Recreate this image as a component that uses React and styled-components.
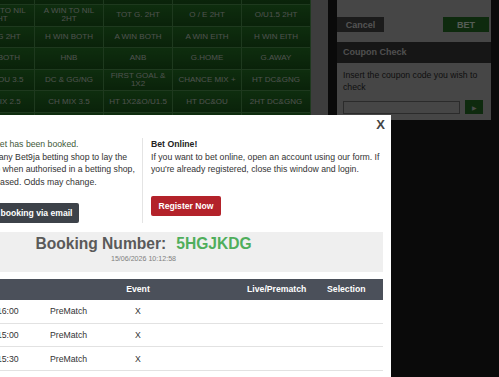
import React from 'react'
import styled, { createGlobalStyle } from 'styled-components'

const GlobalStyle = createGlobalStyle`
  html, body {
    margin: 0;
    padding: 0;
  }
  body {
    font-family: "Liberation Sans", Arial, sans-serif;
    background: #191919;
  }
`

const markets = [
  ['1X2 2HT', 'H WIN TO NIL 2HT', 'DC 2HT', 'GG/NG 2HT', 'O/U0.5 2HT'],
  ['H WIN TO NIL 2HT', 'A WIN TO NIL 2HT', 'TOT G. 2HT', 'O / E 2HT', 'O/U1.5 2HT'],
  ['TOT G 2HT', 'H WIN BOTH', 'A WIN BOTH', 'A WIN EITH', 'H WIN EITH'],
  ['WIN BOTH', 'HNB', 'ANB', 'G.HOME', 'G.AWAY'],
  ['DC & OU 3.5', 'DC & GG/NG', 'FIRST GOAL & 1X2', 'CHANCE MIX +', 'HT DC&GNG'],
  ['CH MIX 2.5', 'CH MIX 3.5', 'HT 1X2&O/U1.5', 'HT DC&OU', '2HT DC&GNG'],
  ['CH MIX 4.5', 'HT CH MIX', 'HT DC&GG', 'MULTI GOAL', 'EXACT G.'],
  ['HT/FT', 'HT O/U', 'HT GG/NG', 'HT 1X2', 'HT DC'],
  ['ODD/EVEN', 'CS', 'H O/U', 'A O/U', '1ST GOAL'],
  ['H GG', 'A GG', 'DNB', 'WIN MARG', 'TOTAL'],
  ['H TOT G', 'A TOT G', 'H CS', 'A CS', 'SPECIAL'],
  ['MIX 1', 'MIX 2', 'MIX 3', 'MIX 4', 'MIX 5'],
  ['MORE', 'MORE', 'MORE', 'MORE', 'MORE'],
]

const events = [
  { no: 1, date: '15/06/2026 16:00', type: 'PreMatch', event: 'X' },
  { no: 2, date: '15/06/2026 15:00', type: 'PreMatch', event: 'X' },
  { no: 3, date: '15/06/2026 15:30', type: 'PreMatch', event: 'X' },
  { no: 4, date: '15/06/2026 17:00', type: 'PreMatch', event: 'X' },
]

// # | date | type | event | market | live/prematch | selection
const columns = '39px 99px 73px 46px 78px 80px 64px'

export default function App() {
  return (
    <>
      <GlobalStyle />
      <Page>
        <Main>
          <MarketGrid>
            {markets.flat().map((m, i) => (
              <MarketCell key={i}>{m}</MarketCell>
            ))}
          </MarketGrid>
        </Main>

        <Sidebar>
          <SlipActions>
            <SlipButton>Cancel</SlipButton>
            <SlipButton $primary>BET</SlipButton>
          </SlipActions>
          <CouponHeader>Coupon Check</CouponHeader>
          <CouponBody>
            <CouponText>Insert the coupon code you wish to check</CouponText>
            <CouponForm>
              <CouponInput type="text" />
              <GoButton>&#9654;</GoButton>
            </CouponForm>
          </CouponBody>
        </Sidebar>

        <Overlay />

        <Modal>
          <CloseButton>X</CloseButton>

          <InfoRow>
            <InfoColumn $left>
              <Notice>
                <Booked>Your bet has been booked.</Booked>
                <br />
                Go to any Bet9ja betting shop to lay the
                <br />
                betslip when authorised in a betting shop,
                <br />
                till released. Odds may change.
              </Notice>
              <ActionButton $mt={14} $shift={-4}>Send booking via email</ActionButton>
            </InfoColumn>

            <InfoColumn>
              <OnlineTitle>Bet Online!</OnlineTitle>
              <Notice $wrap>
                If you want to bet online, open an account using our form. If you're already
                registered, close this window and login.
              </Notice>
              <ActionButton $mt={20} $red>Register Now</ActionButton>
            </InfoColumn>
          </InfoRow>

          <BookingBox>
            <BookingTitle>
              Booking Number:<BookingCode>5HGJKDG</BookingCode>
            </BookingTitle>
            <BookingDate>15/06/2026 10:12:58</BookingDate>
          </BookingBox>

          <Table>
            <TableHead>
              <HeadCell>#</HeadCell>
              <HeadCell>Date</HeadCell>
              <HeadCell></HeadCell>
              <HeadCell $center>Event</HeadCell>
              <HeadCell></HeadCell>
              <HeadCell>Live/Prematch</HeadCell>
              <HeadCell>Selection</HeadCell>
            </TableHead>
            {events.map((e) => (
              <TableRow key={e.no}>
                <Cell>{e.no}</Cell>
                <Cell>{e.date}</Cell>
                <Cell>{e.type}</Cell>
                <Cell $center>{e.event}</Cell>
                <Cell></Cell>
                <Cell></Cell>
                <Cell></Cell>
              </TableRow>
            ))}
          </Table>
        </Modal>
      </Page>
    </>
  )
}

const Page = styled.div`
  position: relative;
  display: flex;
  align-items: flex-start;
  gap: 9px;
  width: 100vw;
  height: 100vh;
  overflow: hidden;
  background: #191919;
`

const Main = styled.div`
  flex: 0 0 362px;
  margin-left: -34px;
  height: 100%;
  background: #989898;
`

const MarketGrid = styled.div`
  display: grid;
  grid-template-columns: repeat(5, 68px);
  grid-auto-rows: 20.6px;
  gap: 1px;
  width: 344px;
  margin-top: -16.6px;
  background: #4b8f4b;
  border-right: 1px solid #4b8f4b;
`

const MarketCell = styled.div`
  display: flex;
  align-items: center;
  justify-content: center;
  padding: 0 3px;
  text-align: center;
  font-size: 8px;
  line-height: 1;
  color: #c2ccc2;
  background: linear-gradient(#247224, #1a561a);
`

const Sidebar = styled.div`
  flex: 0 0 154px;
  padding-top: 17px;
  background: #afafaf;
`

const SlipActions = styled.div`
  display: flex;
  justify-content: space-between;
  padding-right: 2px;
`

const SlipButton = styled.button`
  width: ${(p) => (p.$primary ? '46px' : '47px')};
  height: 15px;
  padding: 0;
  border: none;
  font-family: inherit;
  font-size: 9px;
  font-weight: bold;
  color: ${(p) => (p.$primary ? '#d8e6d8' : '#cfcfcf')};
  background: ${(p) => (p.$primary ? '#236923' : '#444444')};
`

const CouponHeader = styled.div`
  margin-top: 10px;
  height: 21px;
  padding-left: 6px;
  line-height: 21px;
  font-size: 9px;
  font-weight: bold;
  color: #c4c4c4;
  background: #383838;
`

const CouponBody = styled.div`
  padding: 6px 6px 6px;
`

const CouponText = styled.p`
  margin: 0;
  font-size: 8.7px;
  line-height: 12px;
  color: #2a2a2a;
`

const CouponForm = styled.div`
  display: flex;
  align-items: center;
  gap: 5px;
  margin-top: 7px;
`

const CouponInput = styled.input`
  box-sizing: border-box;
  width: 117px;
  height: 13px;
  padding: 0;
  border: 1px solid #6b6b6b;
  background: #b0b0b0;
`

const GoButton = styled.button`
  width: 18px;
  height: 14px;
  padding: 0;
  border: none;
  font-size: 6px;
  color: #bbbbbb;
  background: #236923;
`

const Overlay = styled.div`
  position: absolute;
  inset: 0;
  background: rgba(0, 0, 0, 0.6);
`

const Modal = styled.div`
  position: absolute;
  top: 115px;
  left: -104px;
  box-sizing: border-box;
  width: 495px;
  height: 320px;
  padding: 23px 8px 0;
  background: #ffffff;
`

const CloseButton = styled.span`
  position: absolute;
  top: 3px;
  right: 6px;
  font-size: 13px;
  line-height: 13px;
  font-weight: bold;
  color: #444444;
`

const InfoRow = styled.div`
  display: flex;
`

const InfoColumn = styled.div`
  display: flex;
  flex-direction: column;
  align-items: flex-start;
  box-sizing: border-box;
  ${(p) =>
    p.$left
      ? 'flex: 0 0 238px; padding-left: 71px;'
      : 'flex: 1; padding-left: 8px; border-left: 1px solid #e4e4e4;'}
`

const Notice = styled.p`
  margin: 0;
  font-size: 8.7px;
  line-height: 12.7px;
  color: #333333;
  white-space: ${(p) => (p.$wrap ? 'normal' : 'nowrap')};
`

const Booked = styled.span`
  color: #3f5a39;
`

const OnlineTitle = styled.h4`
  margin: 0;
  font-size: 8.7px;
  line-height: 12.7px;
  font-weight: bold;
  color: #222222;
`

const ActionButton = styled.button`
  height: 20px;
  margin-top: ${(p) => p.$mt}px;
  margin-left: ${(p) => p.$shift || 0}px;
  padding: 0 ${(p) => (p.$red ? '7.5px' : '6px')};
  border: none;
  border-radius: 2px;
  font-family: inherit;
  font-size: 8.6px;
  font-weight: bold;
  white-space: nowrap;
  color: #ffffff;
  background: ${(p) => (p.$red ? '#b3222a' : '#3d4249')};
`

const BookingBox = styled.div`
  margin-top: 9px;
  height: 40px;
  box-sizing: border-box;
  padding-top: 3px;
  text-align: center;
  background: #efefef;
`

const BookingTitle = styled.div`
  font-size: 15.6px;
  line-height: 18px;
  font-weight: bold;
  color: #5a5a5a;
`

const BookingCode = styled.span`
  margin-left: 10px;
  color: #4fae5c;
`

const BookingDate = styled.div`
  margin-top: 2px;
  font-size: 7.1px;
  line-height: 9px;
  color: #808080;
`

const Table = styled.div`
  margin-top: 7px;
`

const TableHead = styled.div`
  display: grid;
  grid-template-columns: ${columns};
  height: 21px;
  background: #4b505a;
`

const HeadCell = styled.div`
  display: flex;
  align-items: center;
  justify-content: ${(p) => (p.$center ? 'center' : 'flex-start')};
  padding-left: ${(p) => (p.$center ? '0' : '8px')};
  font-size: 8.7px;
  font-weight: bold;
  color: #ffffff;
`

const TableRow = styled.div`
  display: grid;
  grid-template-columns: ${columns};
  box-sizing: border-box;
  height: 23.7px;
  border-bottom: 1px solid #e2e2e2;
`

const Cell = styled.div`
  display: flex;
  align-items: center;
  justify-content: ${(p) => (p.$center ? 'center' : 'flex-start')};
  padding-left: ${(p) => (p.$center ? '0' : '8px')};
  font-size: 8.7px;
  white-space: nowrap;
  color: #333333;
`
